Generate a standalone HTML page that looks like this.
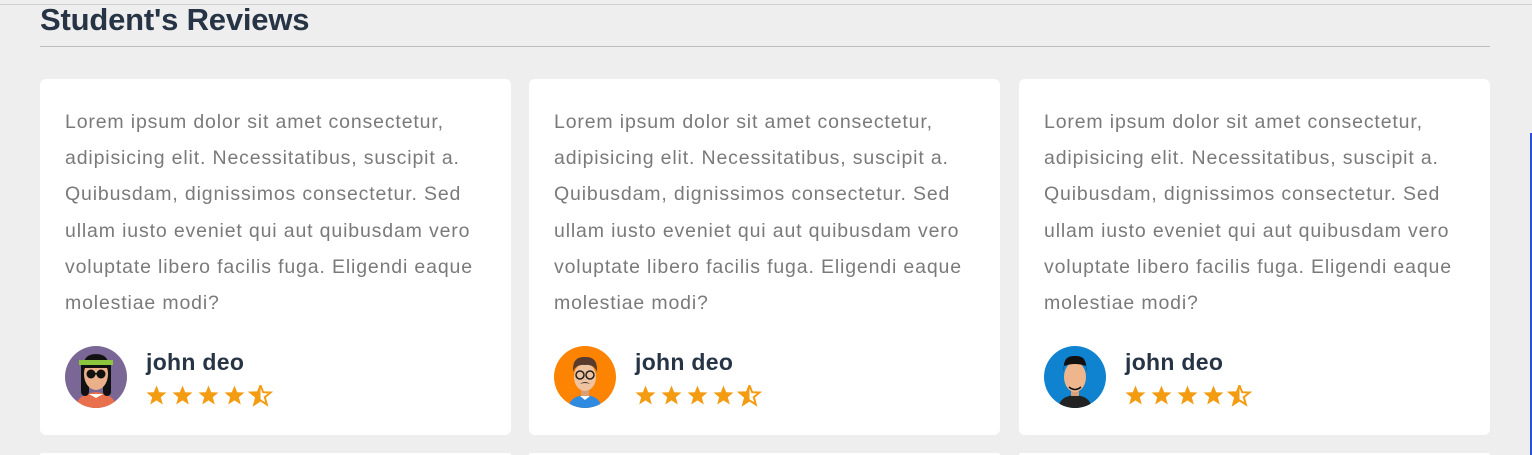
<!DOCTYPE html>
<html><head><meta charset="utf-8"><style>
html,body{margin:0;padding:0;width:1532px;height:455px;overflow:hidden}
body{background:#eeeeee;position:relative;font-family:"Liberation Sans",sans-serif}
.topline{position:absolute;left:0;top:4px;width:1532px;height:1px;background:#cfcfcf}
.sb{position:absolute;left:1530px;top:133px;width:2px;height:322px;background:#2a4fd8}
h2{position:absolute;left:40px;top:0;margin:0;font-size:31px;font-weight:bold;color:#263445;line-height:40px;letter-spacing:-0.2px}
.hr{position:absolute;left:40px;top:46px;width:1450px;height:1px;background:#bdbdbd}
.card{position:absolute;top:79px;width:471px;height:356px;background:#fff;border-radius:6px}
.card2{top:453px;height:2px;border-radius:6px 6px 0 0}
.card p{position:absolute;left:25px;top:25px;margin:0;font-size:19.5px;line-height:36.2px;color:#7a7a7a;letter-spacing:0.85px;white-space:nowrap}
.av{position:absolute;left:25px;top:267px;width:62px;height:62px;border-radius:50%;overflow:hidden}
.name{position:absolute;left:106px;top:270px;font-size:23px;font-weight:bold;color:#263445;letter-spacing:0.3px}
.stars{position:absolute;left:106px;top:306px}
</style></head><body>
<div class="topline"></div>
<h2>Student's Reviews</h2>
<div class="hr"></div>

<svg width="0" height="0" style="position:absolute"><defs>
<path id="st" d="M10.5 0.5 L13.2 7.2 L20.5 7.5 L14.8 12.2 L16.8 19.5 L10.5 15.4 L4.2 19.5 L6.2 12.2 L0.5 7.5 L7.8 7.2Z"/>
</defs></svg>

<div class="card" style="left:40px">
<p>Lorem ipsum dolor sit amet consectetur,<br>adipisicing elit. Necessitatibus, suscipit a.<br>Quibusdam, dignissimos consectetur. Sed<br>ullam iusto eveniet qui aut quibusdam vero<br>voluptate libero facilis fuga. Eligendi eaque<br>molestiae modi?</p>
<div class="av"><svg width="62" height="62" viewBox="0 0 62 62"><rect width="62" height="62" fill="#7b6796"/><path d="M10 62 Q12 48 31 46 Q50 48 52 62Z" fill="#e8704d"/><path d="M24 48 L31 52 L38 48Z" fill="#fff"/><rect x="16" y="14" width="8" height="36" rx="4" fill="#111"/><rect x="38" y="14" width="8" height="36" rx="4" fill="#111"/><ellipse cx="31" cy="28" rx="12" ry="16" fill="#e9b08a"/><path d="M18 22 Q18 8 31 8 Q44 8 44 22Z" fill="#111"/><rect x="14" y="14" width="34" height="5" fill="#8cc63f"/><circle cx="26" cy="28" r="4.5" fill="#111"/><circle cx="36" cy="28" r="4.5" fill="#111"/><rect x="26" y="27" width="10" height="1.5" fill="#111"/></svg></div>
<div class="name">john deo</div>
<div class="stars"><svg width="130" height="22" viewBox="0 0 130 22" fill="#f39c12"><use href="#st"/><use href="#st" x="26"/><use href="#st" x="52"/><use href="#st" x="78"/><g transform="translate(104,0)"><path d="M10.5 0.5 L13.2 7.2 L20.5 7.5 L14.8 12.2 L16.8 19.5 L10.5 15.4 L4.2 19.5 L6.2 12.2 L0.5 7.5 L7.8 7.2Z" fill="none" stroke="#f39c12" stroke-width="2"/><path d="M10.5 0.5 L10.5 15.4 L4.2 19.5 L6.2 12.2 L0.5 7.5 L7.8 7.2Z"/></g></svg></div>
</div>

<div class="card" style="left:529px">
<p>Lorem ipsum dolor sit amet consectetur,<br>adipisicing elit. Necessitatibus, suscipit a.<br>Quibusdam, dignissimos consectetur. Sed<br>ullam iusto eveniet qui aut quibusdam vero<br>voluptate libero facilis fuga. Eligendi eaque<br>molestiae modi?</p>
<div class="av"><svg width="62" height="62" viewBox="0 0 62 62"><rect width="62" height="62" fill="#fd8402"/><path d="M14 62 Q16 50 31 49 Q46 50 48 62Z" fill="#2e8be0"/><path d="M26 50 L31 54 L36 50Z" fill="#fff"/><rect x="27" y="42" width="8" height="8" fill="#d9a078"/><ellipse cx="31" cy="31" rx="11" ry="14" fill="#efc3a0"/><path d="M19 26 Q18 10 31 11 Q44 10 43 26 Q40 18 31 19 Q22 18 19 26Z" fill="#5a3a2c"/><circle cx="26" cy="29" r="4" fill="none" stroke="#222" stroke-width="1.5"/><circle cx="36" cy="29" r="4" fill="none" stroke="#222" stroke-width="1.5"/><path d="M26 38 Q31 34 36 38 Q31 36 26 38Z" fill="#333"/></svg></div>
<div class="name">john deo</div>
<div class="stars"><svg width="130" height="22" viewBox="0 0 130 22" fill="#f39c12"><use href="#st"/><use href="#st" x="26"/><use href="#st" x="52"/><use href="#st" x="78"/><g transform="translate(104,0)"><path d="M10.5 0.5 L13.2 7.2 L20.5 7.5 L14.8 12.2 L16.8 19.5 L10.5 15.4 L4.2 19.5 L6.2 12.2 L0.5 7.5 L7.8 7.2Z" fill="none" stroke="#f39c12" stroke-width="2"/><path d="M10.5 0.5 L10.5 15.4 L4.2 19.5 L6.2 12.2 L0.5 7.5 L7.8 7.2Z"/></g></svg></div>
</div>

<div class="card" style="left:1019px">
<p>Lorem ipsum dolor sit amet consectetur,<br>adipisicing elit. Necessitatibus, suscipit a.<br>Quibusdam, dignissimos consectetur. Sed<br>ullam iusto eveniet qui aut quibusdam vero<br>voluptate libero facilis fuga. Eligendi eaque<br>molestiae modi?</p>
<div class="av"><svg width="62" height="62" viewBox="0 0 62 62"><rect width="62" height="62" fill="#0f83d0"/><path d="M14 62 Q16 50 31 49 Q46 50 48 62Z" fill="#222"/><rect x="27" y="42" width="8" height="8" fill="#d9a078"/><ellipse cx="31" cy="31" rx="11" ry="15" fill="#efb58c"/><path d="M20 26 Q18 9 31 10 Q44 9 42 26 L42 20 Q31 16 20 20Z" fill="#111"/><path d="M25 41 Q31 46 37 41" fill="none" stroke="#111" stroke-width="1.5"/></svg></div>
<div class="name">john deo</div>
<div class="stars"><svg width="130" height="22" viewBox="0 0 130 22" fill="#f39c12"><use href="#st"/><use href="#st" x="26"/><use href="#st" x="52"/><use href="#st" x="78"/><g transform="translate(104,0)"><path d="M10.5 0.5 L13.2 7.2 L20.5 7.5 L14.8 12.2 L16.8 19.5 L10.5 15.4 L4.2 19.5 L6.2 12.2 L0.5 7.5 L7.8 7.2Z" fill="none" stroke="#f39c12" stroke-width="2"/><path d="M10.5 0.5 L10.5 15.4 L4.2 19.5 L6.2 12.2 L0.5 7.5 L7.8 7.2Z"/></g></svg></div>
</div>

<div class="card card2" style="left:40px"></div>
<div class="card card2" style="left:529px"></div>
<div class="card card2" style="left:1019px"></div>
<div class="sb"></div>
</body></html>
